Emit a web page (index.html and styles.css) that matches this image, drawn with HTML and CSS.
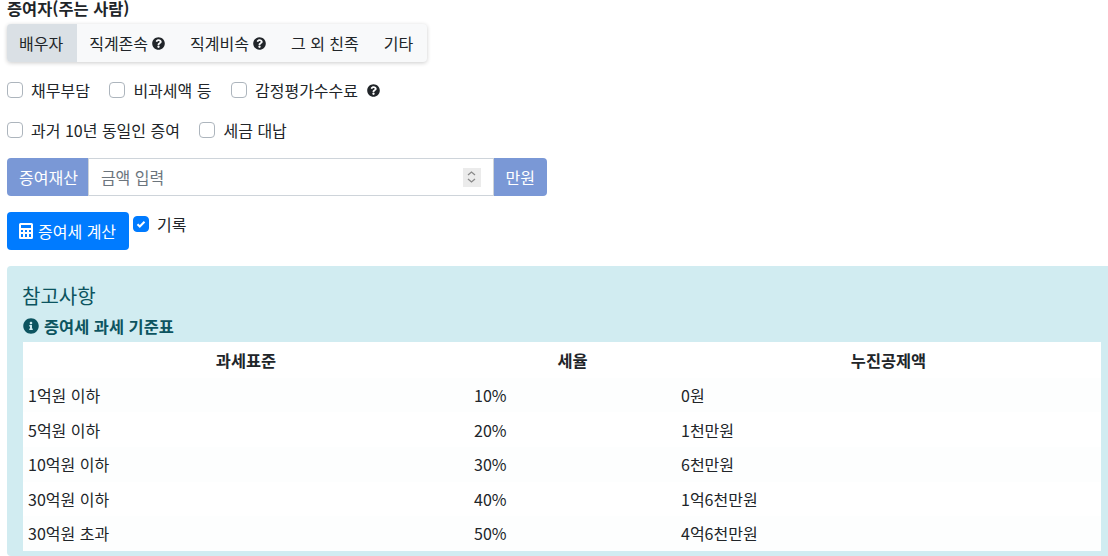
FILE: index.html
```html
<!DOCTYPE html>
<html lang="ko">

<head>
  <meta charset="UTF-8">
  <meta name="viewport" content="width=device-width, initial-scale=1.0">
  <title>증여세 계산</title>
  <link rel="stylesheet" href="styles.css">
</head>

<body>
  <svg class="defs" width="0" height="0">
    <symbol id="q" viewBox="0 0 512 512">
      <path d="M504 256c0 137-111 248-248 248S8 393 8 256 119 8 256 8s248 111 248 248zM263 90c-54 0-89 23-116 63-4 5-3 12 3 16l35 26c5 4 13 3 17-2 18-23 30-36 57-36 20 0 45 13 45 33 0 15-12 22-32 33-23 13-54 30-54 71v6c0 7 5 12 12 12h56c7 0 12-5 12-12v-2c0-29 83-30 83-107 0-58-60-100-118-100zm-7 249c-25 0-46 21-46 46s21 46 46 46 46-21 46-46-21-46-46-46z" />
    </symbol>
  </svg>

  <div class="label">증여자(주는 사람)</div>
  <div class="tabs">
    <span class="tab active">배우자</span>
    <span class="tab">직계존속 <svg class="q"><use href="#q" /></svg></span>
    <span class="tab">직계비속 <svg class="q"><use href="#q" /></svg></span>
    <span class="tab">그 외 친족</span>
    <span class="tab">기타</span>
  </div>

  <div class="checks first">
    <label class="check"><span class="box"></span>채무부담</label>
    <label class="check"><span class="box"></span>비과세액 등</label>
    <label class="check"><span class="box"></span>감정평가수수료<svg class="q after"><use href="#q" /></svg></label>
  </div>
  <div class="checks">
    <label class="check"><span class="box"></span>과거 10년 동일인 증여</label>
    <label class="check"><span class="box"></span>세금 대납</label>
  </div>

  <div class="group">
    <span class="addon left">증여재산</span>
    <div class="field">
      <span class="placeholder">금액 입력</span>
      <span class="spin">
        <svg width="9" height="14" viewBox="0 0 9 14">
          <path d="M1 5l3.5-3L8 5M1 9l3.5 3L8 9" fill="none" stroke="#8a8a8a" stroke-width="1.3" />
        </svg>
      </span>
    </div>
    <span class="addon right">만원</span>
  </div>

  <div class="actions">
    <button class="btn">
      <svg class="calc" viewBox="0 0 14 16">
        <path fill-rule="evenodd" fill="#fff" d="M1.5 0h11A1.5 1.5 0 0 1 14 1.500v13a1.500 1.500 0 0 1-1.500 1.500h-11A1.500 1.500 0 0 1 0 14.500v-13A1.500 1.500 0 0 1 1.500 0zM2 2v3h10V2zM2 7v2h2V7zm4 0v2h2V7zm4 0v2h2V7zM2 11v3h2v-3zm4 0v3h2v-3zm4 0v3h2v-3z" />
      </svg>증여세 계산
    </button>
    <label class="check record">
      <span class="box on">
        <svg width="10" height="10" viewBox="0 0 10 10">
          <path d="M1.500 5.200l2.300 2.300 4.700-4.700" fill="none" stroke="#fff" stroke-width="2" />
        </svg>
      </span>기록
    </label>
  </div>

  <div class="alert">
    <h4>참고사항</h4>
    <div class="note">
      <svg class="info" viewBox="0 0 512 512">
        <path d="M256 8C119 8 8 119 8 256s111 248 248 248 248-111 248-248S393 8 256 8zm0 110c23 0 42 19 42 42s-19 42-42 42-42-19-42-42 19-42 42-42zm56 254c0 7-5 12-12 12h-88c-7 0-12-5-12-12v-24c0-7 5-12 12-12h12v-64h-12c-7 0-12-5-12-12v-24c0-7 5-12 12-12h64c7 0 12 5 12 12v100h12c7 0 12 5 12 12z" />
      </svg>증여세 과세 기준표
    </div>
    <table>
      <thead>
        <tr>
          <th>과세표준</th>
          <th>세율</th>
          <th>누진공제액</th>
        </tr>
      </thead>
      <tbody>
        <tr>
          <td>1억원 이하</td>
          <td>10%</td>
          <td>0원</td>
        </tr>
        <tr>
          <td>5억원 이하</td>
          <td>20%</td>
          <td>1천만원</td>
        </tr>
        <tr>
          <td>10억원 이하</td>
          <td>30%</td>
          <td>6천만원</td>
        </tr>
        <tr>
          <td>30억원 이하</td>
          <td>40%</td>
          <td>1억6천만원</td>
        </tr>
        <tr>
          <td>30억원 초과</td>
          <td>50%</td>
          <td>4억6천만원</td>
        </tr>
      </tbody>
    </table>
  </div>
</body>

</html>
```

FILE: styles.css
```css
* {
  box-sizing: border-box;
}

body {
  margin: 0;
  padding: 0 0 0 7px;
  font-family: "Noto Sans CJK KR", "Noto Sans", sans-serif;
  font-size: 16px;
  line-height: 22px;
  color: #212529;
  background: #fff;
}

.defs {
  position: absolute;
}

.label {
  font-weight: 700;
  font-size: 16.400px;
  height: 24px;
  line-height: 17px;
}

.tabs {
  display: inline-flex;
  height: 38px;
  background: #f8f9fa;
  border-radius: 4px;
  box-shadow: 0 1px 4px rgba(0, 0, 0, 0.2);
}

.tab {
  display: flex;
  align-items: center;
  gap: 4px;
  padding: 0 13px 0 12px;
}

.tab.active {
  padding-right: 14px;
  background: #dae0e5;
  border-radius: 4px 0 0 4px;
}

.tab:last-child {
  padding-right: 14px;
}

.q {
  width: 13px;
  height: 13px;
  fill: #212529;
}

.q.after {
  margin-left: 9px;
}

.checks {
  display: flex;
  gap: 19.500px;
  margin-top: 18px;
  height: 22px;
}

.checks.first {
  margin-top: 17px;
}

.check {
  display: flex;
  align-items: center;
}

.box {
  display: flex;
  align-items: center;
  justify-content: center;
  width: 16px;
  height: 16px;
  margin-right: 8px;
  border: 1px solid #adb5bd;
  border-radius: 4px;
  background: #fff;
}

.box.on {
  background: #007bff;
  border-color: #007bff;
}

.group {
  display: flex;
  width: 540px;
  height: 38px;
  margin-top: 17px;
}

.addon {
  display: flex;
  align-items: center;
  color: #fff;
  background: #7a98d6;
}

.addon.left {
  padding: 0 10px 0 12px;
  border-radius: 4px 0 0 4px;
}

.addon.right {
  padding: 0 12px;
  border-radius: 0 4px 4px 0;
}

.field {
  flex: 1;
  display: flex;
  align-items: center;
  justify-content: space-between;
  padding: 0 12px;
  border: 1px solid #ced4da;
  color: #6c757d;
}

.spin {
  display: flex;
  align-items: center;
  justify-content: center;
  width: 18px;
  height: 19px;
  background: #ebebeb;
}

.actions {
  display: flex;
  align-items: flex-start;
  margin-top: 16px;
}

.btn {
  display: flex;
  align-items: center;
  height: 38px;
  padding: 0 13px 0 12px;
  border: 0;
  border-radius: 4px;
  font: inherit;
  color: #fff;
  background: #007bff;
}

.calc {
  width: 14px;
  height: 16px;
  margin-right: 5px;
}

.record {
  margin: 1px 0 0 4px;
}

.alert {
  margin-top: 16px;
  height: 290px;
  padding: 13px 7px 0 16px;
  color: #0c5460;
  background: #d1ecf1;
  border-radius: 4px 0 0 4px;
}

h4 {
  margin: 0 0 0 -1px;
  font-size: 20px;
  font-weight: 400;
  line-height: 34px;
}

.note {
  display: flex;
  align-items: center;
  font-weight: 700;
  font-size: 16.400px;
  height: 29px;
  padding-bottom: 4px;
}

.info {
  width: 16px;
  height: 16px;
  margin-right: 5px;
  fill: #0c5460;
}

table {
  width: 100%;
  border-collapse: collapse;
  color: #212529;
  background: #fff;
  table-layout: fixed;
}

th {
  height: 35.900px;
  font-weight: 700;
  font-size: 16.400px;
}

td {
  height: 34.550px;
  padding: 0 5px;
}

tbody tr:nth-child(odd) {
  background: #fdfefe;
}

th:nth-child(1),
td:nth-child(1) {
  width: 446px;
}

th:nth-child(2),
td:nth-child(2) {
  width: 207px;
}
```
